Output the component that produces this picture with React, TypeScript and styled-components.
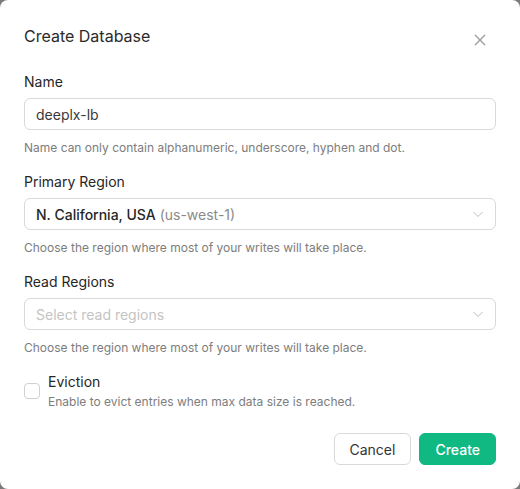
import React from "react";
import styled, { createGlobalStyle } from "styled-components";

const Global = createGlobalStyle`
  html, body { margin: 0; padding: 0; background: #7a7a7a; }
  body { font-family: Inter, "Noto Sans", sans-serif; -webkit-font-smoothing: antialiased; }
  * { box-sizing: border-box; }
`;

const Modal = styled.div`
  width: 520px;
  height: 489px;
  background: #fff;
  border-radius: 8px;
  padding: 24px 24px 24px 24px;
  display: flex;
  flex-direction: column;
`;

const Header = styled.div`
  display: flex;
  justify-content: space-between;
  align-items: center;
  height: 24px;
  margin-bottom: 23px;
`;

const Title = styled.h2`
  margin: 0;
  font-size: 16px;
  line-height: 24px;
  font-weight: 400;
  color: #2b2b2b;
`;

const Close = styled.button`
  border: 0;
  background: none;
  padding: 0;
  width: 16px;
  height: 16px;
  margin-top: 8px;
  margin-right: 8px;
  display: flex;
  align-items: center;
  justify-content: center;
  color: #9a9a9a;
`;

const Field = styled.div<{ $gap?: number }>`
  display: flex;
  flex-direction: column;
  margin-bottom: ${(p) => p.$gap ?? 13}px;
`;

const Label = styled.label`
  font-size: 14px;
  line-height: 22px;
  color: #262626;
  margin-bottom: 5px;
`;

const Box = styled.div`
  height: 32px;
  border: 1px solid #d9d9d9;
  border-radius: 6px;
  padding: 0 11px;
  display: flex;
  align-items: center;
  justify-content: space-between;
  font-size: 14px;
  color: #333;
`;

const Value = styled.span`
  color: #3a3a3a;
`;

const Strong = styled.span`
  font-weight: 500;
  color: #262626;
`;

const Muted = styled.span<{ $light?: boolean }>`
  color: ${(p) => (p.$light ? "#c4c4c4" : "#8a8a8a")};
`;

const Help = styled.div`
  font-size: 12px;
  line-height: 20px;
  color: #7d7d7d;
  margin-top: 8px;
`;

const CheckRow = styled.div`
  display: flex;
  align-items: flex-start;
  gap: 8px;
  margin-bottom: 21px;
`;

const CheckBox = styled.span`
  width: 16px;
  height: 16px;
  border: 1px solid #d0d0d0;
  border-radius: 4px;
  margin-top: 11px;
  flex: none;
`;

const CheckText = styled.div`
  display: flex;
  flex-direction: column;
`;

const CheckTitle = styled.span`
  font-size: 14px;
  line-height: 20px;
  color: #262626;
`;

const CheckDesc = styled.span`
  font-size: 12px;
  line-height: 20px;
  color: #7d7d7d;
`;

const Footer = styled.div`
  display: flex;
  justify-content: flex-end;
  gap: 8px;
`;

const Button = styled.button<{ $primary?: boolean }>`
  height: 32px;
  padding: 0 15px;
  border-radius: 6px;
  font-family: inherit;
  font-size: 14px;
  font-weight: ${(p) => (p.$primary ? 500 : 400)};
  border: 1px solid ${(p) => (p.$primary ? "#10b981" : "#d9d9d9")};
  background: ${(p) => (p.$primary ? "#10b981" : "#fff")};
  color: ${(p) => (p.$primary ? "#fff" : "#333")};
`;

const Chevron = () => (
  <svg width="12" height="12" viewBox="0 0 12 12" fill="none">
    <path d="M1.5 4l4.5 4.5L10.5 4" stroke="#bdbdbd" strokeWidth="1" />
  </svg>
);

export default function App() {
  return (
    <>
      <Global />
      <Modal>
        <Header>
          <Title>Create Database</Title>
          <Close aria-label="Close">
            <svg width="12" height="12" viewBox="0 0 12 12">
              <path d="M1 1l10 10M11 1L1 11" stroke="#9a9a9a" strokeWidth="1.3" />
            </svg>
          </Close>
        </Header>

        <Field>
          <Label>Name</Label>
          <Box>
            <Value>deeplx-lb</Value>
          </Box>
          <Help>Name can only contain alphanumeric, underscore, hyphen and dot.</Help>
        </Field>

        <Field>
          <Label>Primary Region</Label>
          <Box>
            <span>
              <Strong>N. California, USA</Strong> <Muted>(us-west-1)</Muted>
            </span>
            <Chevron />
          </Box>
          <Help>Choose the region where most of your writes will take place.</Help>
        </Field>

        <Field $gap={14}>
          <Label>Read Regions</Label>
          <Box>
            <Muted $light>Select read regions</Muted>
            <Chevron />
          </Box>
          <Help>Choose the region where most of your writes will take place.</Help>
        </Field>

        <CheckRow>
          <CheckBox />
          <CheckText>
            <CheckTitle>Eviction</CheckTitle>
            <CheckDesc>Enable to evict entries when max data size is reached.</CheckDesc>
          </CheckText>
        </CheckRow>

        <Footer>
          <Button>Cancel</Button>
          <Button $primary>Create</Button>
        </Footer>
      </Modal>
    </>
  );
}
